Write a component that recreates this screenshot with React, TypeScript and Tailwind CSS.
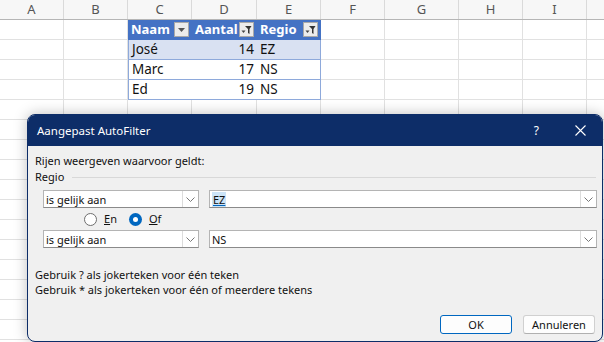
import React from "react";

const cols = [
  { l: "A", w: 64 },
  { l: "B", w: 64 },
  { l: "C", w: 64 },
  { l: "D", w: 65 },
  { l: "E", w: 64 },
  { l: "F", w: 64 },
  { l: "G", w: 74 },
  { l: "H", w: 64 },
  { l: "I", w: 64 },
  { l: "", w: 60 },
];

const gridCols = "grid grid-cols-[64px_64px_64px_65px_64px_64px_74px_64px_64px_60px]";

function FilterBtn({ funnel }: { funnel?: boolean }) {
  return (
    <span className="ml-auto mr-[2px] flex h-[15px] w-[15px] items-center justify-center border border-[#a9a9a9] bg-[#ececec]">
      {funnel ? (
        <svg width="11" height="10" viewBox="0 0 11 10">
          <path d="M0.5 5.5h4l-2 2.5z" fill="#444" />
          <path d="M4 1h6.5L8.5 4v5l-1.5-1V4z" fill="#333" />
        </svg>
      ) : (
        <svg width="7" height="4" viewBox="0 0 7 4">
          <path d="M0 0h7L3.5 4z" fill="#555" />
        </svg>
      )}
    </span>
  );
}

function Chevron() {
  return (
    <span className="flex h-full w-[16px] items-center justify-center border-l border-[#dcdcdc] bg-white">
      <svg width="9" height="5" viewBox="0 0 9 5">
        <path d="M0.5 0.5L4.5 4.5L8.5 0.5" fill="none" stroke="#777" strokeWidth="1" />
      </svg>
    </span>
  );
}

function Combo({ text, wide, selected }: { text: string; wide?: boolean; selected?: boolean }) {
  return (
    <div
      className={
        (wide ? "w-[388px]" : "w-[156px]") +
        " flex h-[18px] items-center border border-[#b4b4b4] border-b-[#8a8a8a] bg-white"
      }
    >
      <span className="flex-1 pl-[2px] leading-[15px]">
        {selected ? <span className="bg-[#cce4f7] px-[1px] underline decoration-[#0067c0]">{text}</span> : text}
      </span>
      <Chevron />
    </div>
  );
}

function Radio({ checked, label }: { checked?: boolean; label: string }) {
  return (
    <span className="flex items-center gap-[7px]">
      {checked ? (
        <span className="flex h-[13px] w-[13px] items-center justify-center rounded-full bg-[#0067c0]">
          <span className="h-[5px] w-[5px] rounded-full bg-white" />
        </span>
      ) : (
        <span className="h-[13px] w-[13px] rounded-full border border-[#6e6e6e] bg-white" />
      )}
      <span>
        <span className="underline">{label[0]}</span>
        {label.slice(1)}
      </span>
    </span>
  );
}

export default function App() {
  const rows = Array.from({ length: 16 });
  return (
    <div className="relative h-[342px] w-[604px] overflow-hidden bg-white font-['Noto_Sans',sans-serif]">
      {/* sheet */}
      <div className={gridCols + " h-[20px] border-b border-[#b6b6b6] bg-[#f7f7f7] text-[13px] text-[#555]"}>
        {cols.map((c, i) => (
          <div key={i} className="flex items-center justify-center border-r border-[#dadada] leading-none">
            {c.l}
          </div>
        ))}
      </div>
      {rows.map((_, r) => (
        <div key={r} className={gridCols + " h-[20px] text-[13.5px] leading-none"}>
          {cols.map((c, ci) => {
            let cls = "flex items-center border-r border-b border-[#e1e1e1] px-[3px]";
            let content: React.ReactNode = null;
            if (r === 0 && ci >= 2 && ci <= 4) {
              cls =
                "flex items-center border-r border-b border-[#4472c4] bg-[#4472c4] pl-[3px] text-[13px] font-bold text-white";
              content = (
                <>
                  {["Naam", "Aantal", "Regio"][ci - 2]}
                  <FilterBtn funnel={ci > 2} />
                </>
              );
            } else if (r >= 1 && r <= 3 && ci >= 2 && ci <= 4) {
              const data = [
                ["José", "14", "EZ"],
                ["Marc", "17", "NS"],
                ["Ed", "19", "NS"],
              ][r - 1];
              cls =
                "flex items-center border-b border-[#8ea9db] px-[3px] text-[#111] " +
                (ci === 2 ? "border-l " : "") +
                (ci === 4 ? "border-r " : "") +
                (ci === 3 ? "justify-end " : "") +
                (r === 1 ? "bg-[#d9e1f2]" : "bg-white");
              content = data[ci - 2];
            }
            return (
              <div key={ci} className={cls}>
                {content}
              </div>
            );
          })}
        </div>
      ))}

      {/* dialog */}
      <div className="absolute left-[27px] top-[114px] flex h-[228px] w-[576px] flex-col overflow-hidden rounded-[8px] border border-[#0d2d68] bg-[#f0f0f0] text-[11px] text-[#111] shadow-[0_0_14px_rgba(0,0,0,0.25)]">
        <div className="flex h-[31px] shrink-0 items-center bg-[#0d2d68] pl-[9px] text-[11.5px] text-white">
          <span>Aangepast AutoFilter</span>
          <span className="ml-auto mr-[36px] text-[12px]">?</span>
          <svg className="mr-[16px]" width="11" height="11" viewBox="0 0 11 11">
            <path d="M0.5 0.5L10.5 10.5M10.5 0.5L0.5 10.5" stroke="white" strokeWidth="1.1" />
          </svg>
        </div>
        <div className="flex flex-1 flex-col pl-[7px] pr-[5px] pt-[7px]">
          <div className="leading-[16px]">Rijen weergeven waarvoor geldt:</div>
          <div className="flex items-center leading-[16px]">
            <span>Regio</span>
            <span className="ml-[8px] mr-[1px] h-px flex-1 bg-[#d8d8d8]" />
          </div>
          <div className="mt-[5px] flex gap-[10px] pl-[8px]">
            <Combo text="is gelijk aan" />
            <Combo text="EZ" wide selected />
          </div>
          <div className="flex h-[22px] items-center gap-[12px] pl-[49px]">
            <Radio label="En" />
            <Radio label="Of" checked />
          </div>
          <div className="flex gap-[10px] pl-[8px]">
            <Combo text="is gelijk aan" />
            <Combo text="NS" wide />
          </div>
          <div className="mt-[19px] leading-[15px]">Gebruik ? als jokerteken voor één teken</div>
          <div className="leading-[15px]">Gebruik * als jokerteken voor één of meerdere tekens</div>
          <div className="mt-[18px] flex justify-end gap-[11px] pr-[2px]">
            <button className="h-[19px] w-[72px] rounded-[3px] border border-[#0067c0] bg-[#fdfdfd] leading-none">
              OK
            </button>
            <button className="h-[19px] w-[72px] rounded-[3px] border border-[#d0d0d0] border-b-[#b0b0b0] bg-[#fdfdfd] leading-none">
              Annuleren
            </button>
          </div>
        </div>
      </div>
    </div>
  );
}
